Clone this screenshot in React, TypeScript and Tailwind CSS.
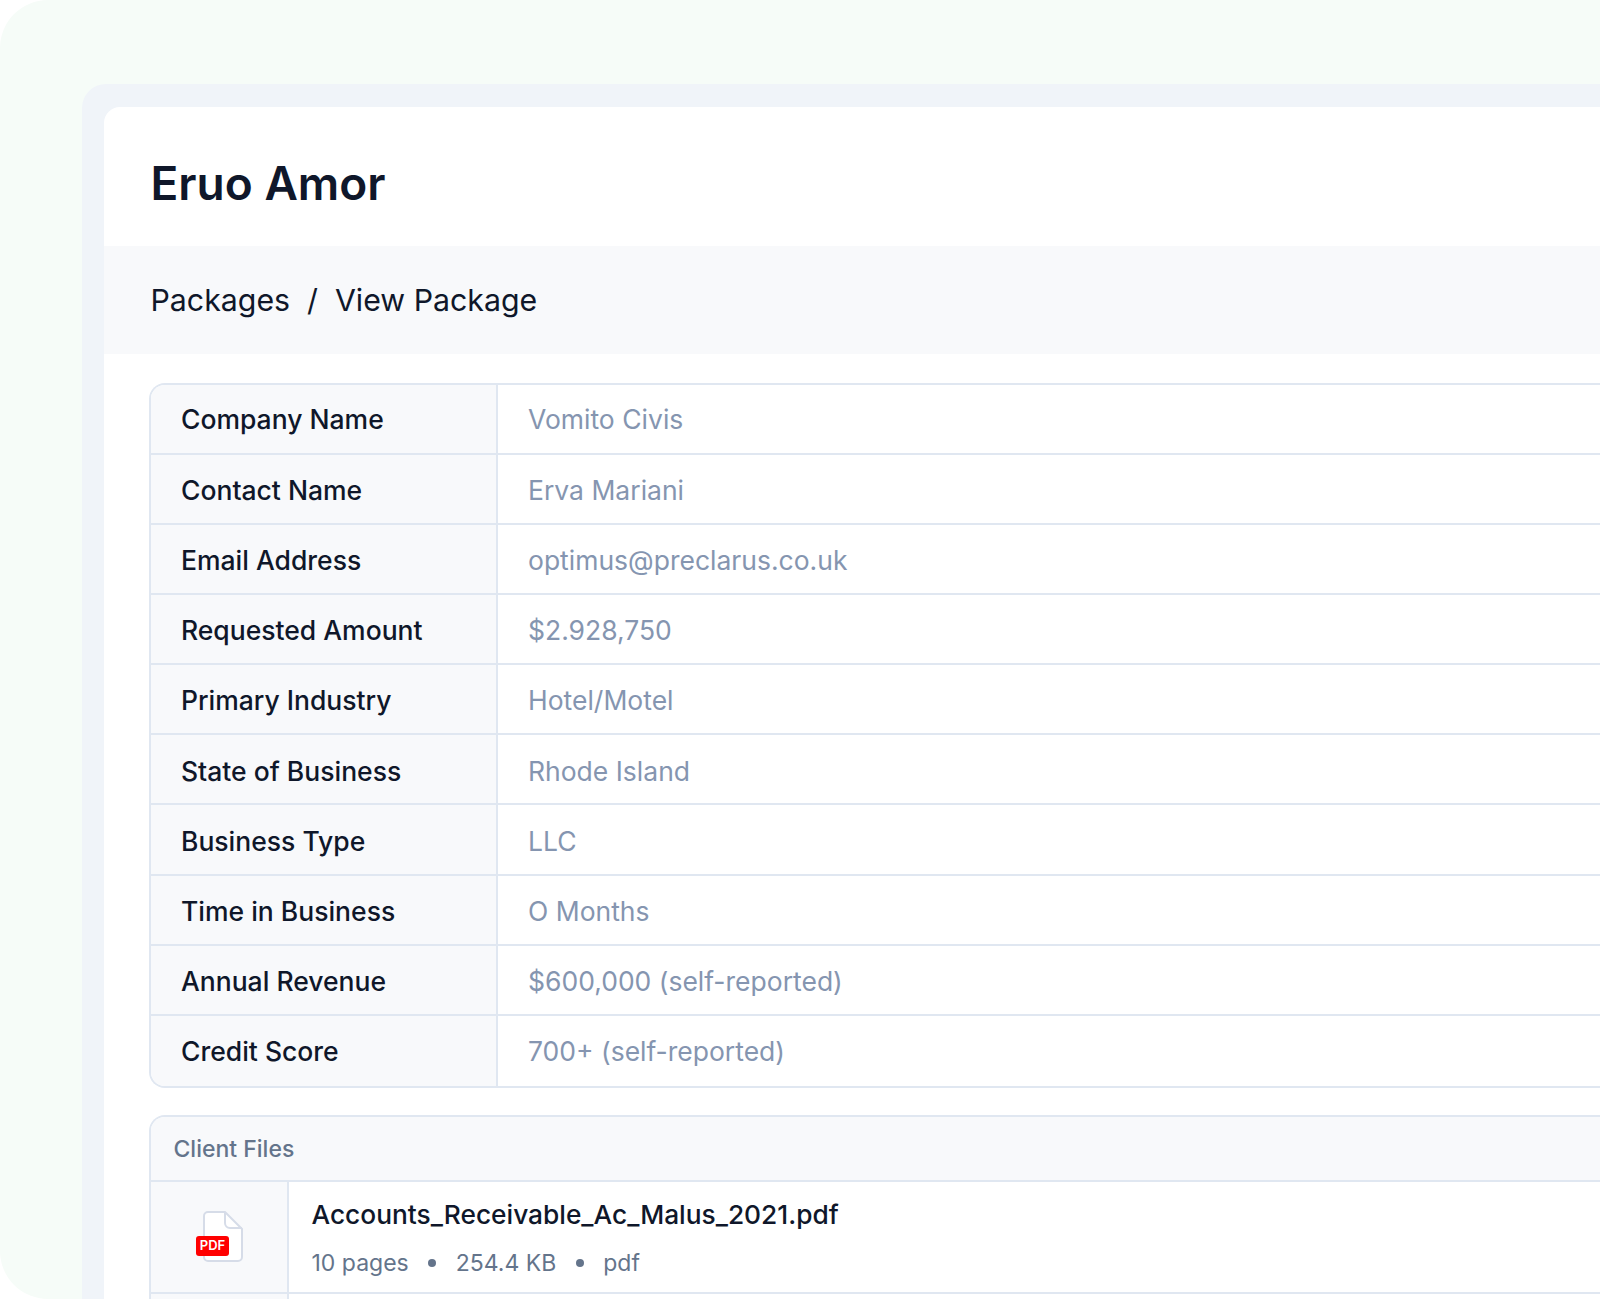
const rows = [
  ["Company Name", "Vomito Civis"],
  ["Contact Name", "Erva Mariani"],
  ["Email Address", "optimus@preclarus.co.uk"],
  ["Requested Amount", "$2.928,750"],
  ["Primary Industry", "Hotel/Motel"],
  ["State of Business", "Rhode Island"],
  ["Business Type", "LLC"],
  ["Time in Business", "O Months"],
  ["Annual Revenue", "$600,000 (self-reported)"],
  ["Credit Score", "700+ (self-reported)"],
];

function PdfIcon() {
  return (
    <div className="relative h-[52px] w-[46px]">
      <svg className="absolute left-[7px] top-0" width="40" height="52" viewBox="0 0 40 52" fill="none">
        <path
          d="M5 1H22L39 18V46a4 4 0 0 1-4 4H5a4 4 0 0 1-4-4V5a4 4 0 0 1 4-4Z"
          fill="#fff"
          stroke="#d6dce8"
          strokeWidth="2"
        />
        <path d="M22 1V12a5 5 0 0 0 5 5H39" stroke="#d6dce8" strokeWidth="2" />
      </svg>
      <div className="absolute left-0 top-[25px] flex h-[20px] w-[33px] items-center justify-center rounded-[3px] bg-[#ff0000] text-[13px] font-semibold leading-none text-white">
        PDF
      </div>
    </div>
  );
}

export default function App() {
  return (
    <div className="h-[1299px] w-[1600px] overflow-hidden bg-white font-['Inter',sans-serif]">
      <div className="h-full rounded-l-[48px] bg-[#f6fcf8] pl-[82px] pt-[84px]">
        <div className="h-[1300px] rounded-tl-[24px] bg-[#f0f4f9] pl-[22px] pt-[23px]">
          <div className="h-full rounded-tl-[16px] bg-white">
            <div className="flex h-[139px] items-center pl-[46.5px] pt-[14px] text-[46px] font-semibold text-[#0f172a]">
              Eruo Amor
            </div>
            <div className="flex h-[108px] items-center gap-[17px] bg-[#f8f9fb] pl-[46.5px] pt-[2px] text-[30.3px] text-[#0f172a]">
              <span>Packages</span>
              <span>/</span>
              <span>View Package</span>
            </div>
            <div className="pl-[45px] pt-[29px]">
              <div className="overflow-hidden rounded-l-[16px] border-y-2 border-l-2 border-[#e0e7f1]">
                {rows.map(([label, value], i) => (
                  <div
                    key={label}
                    className={`flex text-[26.5px] leading-[36px] ${
                      i === 0 ? "h-[68px]" : i === 9 ? "h-[72.5px] border-t-2 border-[#e0e7f1]" : "h-[70.1px] border-t-2 border-[#e0e7f1]"
                    }`}
                  >
                    <div
                      className={`h-full w-[347px] border-r-2 border-[#e0e7f1] bg-[#f8f9fb] pl-[30px] font-medium text-[#0f172a] ${
                        i === 0 ? "pt-[16px]" : "pt-[17.2px]"
                      }`}
                    >
                      {label}
                    </div>
                    <div className={`pl-[30px] text-[#8595b0] ${i === 0 ? "pt-[16px]" : "pt-[17.2px]"}`}>{value}</div>
                  </div>
                ))}
              </div>
              <div className="mt-[27px] overflow-hidden rounded-tl-[16px] border-l-2 border-t-2 border-[#e0e7f1]">
                <div className="flex h-[64.5px] items-center border-b-2 border-[#e0e7f1] bg-[#f8f9fb] pl-[22.5px] pt-[2px] text-[23px] font-medium text-[#64748b]">
                  Client Files
                </div>
                <div className="flex h-[112px] border-b-2 border-[#e0e7f1]">
                  <div className="flex w-[138px] items-center justify-center border-r-2 border-[#e0e7f1] bg-[#f8f9fb]">
                    <PdfIcon />
                  </div>
                  <div className="flex flex-col justify-center gap-[14px] pl-[22.5px] pt-[2px]">
                    <div className="text-[26.3px] font-medium leading-[36px] text-[#0f172a]">
                      Accounts_Receivable_Ac_Malus_2021.pdf
                    </div>
                    <div className="flex items-center gap-[19.5px] text-[23px] leading-[32px] text-[#64748b]">
                      <span>10 pages</span>
                      <span className="h-[8px] w-[8px] rounded-full bg-[#64748b]" />
                      <span>254.4 KB</span>
                      <span className="h-[8px] w-[8px] rounded-full bg-[#64748b]" />
                      <span>pdf</span>
                    </div>
                  </div>
                </div>
                <div className="flex h-[20px]">
                  <div className="w-[138px] border-r-2 border-[#e0e7f1] bg-[#f8f9fb]" />
                </div>
              </div>
            </div>
          </div>
        </div>
      </div>
    </div>
  );
}
